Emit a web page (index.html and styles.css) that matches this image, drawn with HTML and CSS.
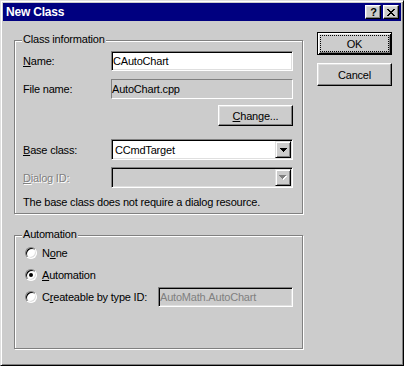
FILE: index.html
```html
<!DOCTYPE html>
<html>
<head>
<meta charset="utf-8">
<title>New Class</title>
<link rel="stylesheet" href="styles.css">
</head>
<body>
<div class="window">
  <div class="titlebar">
    <span class="title">New Class</span>
    <div class="tb-buttons">
      <span class="tb-btn help">?</span>
      <span class="tb-btn close">
        <svg width="8" height="7" viewBox="0 0 8 7" shape-rendering="crispEdges"><path d="M0 0h2v1H0z M6 0h2v1H6z M1 1h2v1H1z M5 1h2v1H5z M2 2h4v1H2z M3 3h2v1H3z M2 4h4v1H2z M1 5h2v1H1z M5 5h2v1H5z M0 6h2v1H0z M6 6h2v1H6z" fill="#000"/></svg>
      </span>
    </div>
  </div>
  <div class="body">
    <div class="left">
      <div class="group g1">
        <div class="legend">Class information</div>
        <div class="row r-name">
          <span class="lbl"><u>N</u>ame:</span>
          <div class="edit field">CAutoChart</div>
        </div>
        <div class="row r-file">
          <span class="lbl">File name:</span>
          <div class="static field">AutoChart.cpp</div>
        </div>
        <div class="row r-change">
          <button class="btn change"><u>C</u>hange...</button>
        </div>
        <div class="row r-base">
          <span class="lbl"><u>B</u>ase class:</span>
          <div class="combo field">
            <span class="combo-text">CCmdTarget</span>
            <span class="combo-btn">
              <svg width="7" height="4" viewBox="0 0 7 4" shape-rendering="crispEdges"><path d="M0 0h7v1H0z M1 1h5v1H1z M2 2h3v1H2z M3 3h1v1H3z" fill="#000"/></svg>
            </span>
          </div>
        </div>
        <div class="row r-dlg">
          <span class="lbl disabled"><u>D</u>ialog ID:</span>
          <div class="combo field is-disabled">
            <span class="combo-text"></span>
            <span class="combo-btn">
              <svg width="8" height="5" viewBox="0 0 8 5" shape-rendering="crispEdges"><path d="M1 1h7v1H1z M2 2h5v1H2z M3 3h3v1H3z M4 4h1v1H4z" fill="#fff"/><path d="M0 0h7v1H0z M1 1h5v1H1z M2 2h3v1H2z M3 3h1v1H3z" fill="#808080"/></svg>
            </span>
          </div>
        </div>
        <p class="note">The base class does not require a dialog resource.</p>
      </div>
      <div class="group g2">
        <div class="legend">Automation</div>
        <div class="radio-row">
          <span class="radio"></span>
          <span>N<u>o</u>ne</span>
        </div>
        <div class="radio-row">
          <span class="radio checked"></span>
          <span><u>A</u>utomation</span>
        </div>
        <div class="radio-row">
          <span class="radio"></span>
          <span class="type-lbl">C<u>r</u>eateable by type ID:</span>
          <div class="edit type-edit is-disabled">AutoMath.AutoChart</div>
        </div>
      </div>
    </div>
    <div class="right">
      <button class="btn default">OK</button>
      <button class="btn">Cancel</button>
    </div>
  </div>
</div>
</body>
</html>
```

FILE: styles.css
```css
:root {
  --face: #cccccc;
}

html, body {
  margin: 0;
  padding: 0;
  background: var(--face);
}

.window {
  width: 404px;
  height: 366px;
  box-sizing: border-box;
  border: 1px solid;
  border-color: #dfdfdf #000 #000 #dfdfdf;
  box-shadow: inset 1px 1px #fff, inset -1px -1px #808080;
  padding: 2px;
  background: var(--face);
  font-family: "Liberation Sans", Arial, sans-serif;
  font-size: 11px;
  letter-spacing: -0.2px;
  color: #000;
  display: flex;
  flex-direction: column;
}

/* Title bar */
.titlebar {
  height: 18px;
  flex: none;
  background: #000080;
  display: flex;
  align-items: center;
  justify-content: space-between;
  padding: 0 2px 0 3px;
}

.title {
  color: #fff;
  font-weight: bold;
  font-size: 12px;
}

.tb-buttons {
  display: flex;
  gap: 2px;
}

.tb-btn {
  width: 16px;
  height: 14px;
  box-sizing: border-box;
  border: 1px solid;
  border-color: #fff #000 #000 #fff;
  box-shadow: inset -1px -1px #808080, inset 1px 1px #dfdfdf;
  background: var(--face);
  display: flex;
  align-items: center;
  justify-content: center;
}

.help {
  font-weight: bold;
  font-size: 11px;
  line-height: 12px;
  letter-spacing: 0;
  padding-left: 1px;
}

/* Body layout */
.body {
  display: flex;
  gap: 14px;
  padding: 11px 0 0 11px;
}

.left {
  width: 289px;
  margin-top: 8px;
  display: flex;
  flex-direction: column;
  gap: 21px;
}

.right {
  width: 75px;
  display: flex;
  flex-direction: column;
  gap: 8px;
}

/* Group boxes */
.group {
  box-sizing: border-box;
  border: 1px solid #808080;
  box-shadow: inset 1px 1px #fff, 1px 1px #fff;
  padding: 0 9px 0 8px;
}

.g1 { height: 174px; }
.g2 { height: 114px; }

.legend {
  width: fit-content;
  margin: -8px 0 0 -1px;
  padding: 0 1px;
  background: var(--face);
  line-height: 13px;
}

/* Rows */
.row {
  display: flex;
  align-items: center;
}

.lbl {
  width: 88px;
  flex: none;
}

.field {
  width: 182px;
  box-sizing: border-box;
}

.r-name { margin-top: 5px; }
.r-file { margin-top: 8px; }
.r-change { margin-top: 6px; justify-content: flex-end; }
.r-base { margin-top: 13px; }
.r-dlg { margin-top: 7px; }

.disabled {
  color: #808080;
  text-shadow: 1px 1px #fff;
}

.note {
  margin: 8px 0 0;
  line-height: 13px;
}

/* Edits */
.edit {
  height: 20px;
  box-sizing: border-box;
  border: 1px solid;
  border-color: #808080 #fff #fff #808080;
  box-shadow: inset 1px 1px #000, inset -1px -1px #dfdfdf;
  background: #fff;
  padding: 0 1px 0 1px;
  display: flex;
  align-items: center;
  white-space: nowrap;
}

.edit.is-disabled {
  background: var(--face);
  color: #808080;
}

.static {
  height: 20px;
  border: 1px solid;
  border-color: #808080 #fff #fff #808080;
  padding: 0 0 0 0;
  display: flex;
  align-items: center;
}

/* Combo boxes */
.combo {
  height: 21px;
  border: 1px solid;
  border-color: #808080 #fff #fff #808080;
  box-shadow: inset 1px 1px #000, inset -1px -1px #dfdfdf;
  background: #fff;
  padding: 1px;
  display: flex;
}

.combo.is-disabled {
  background: var(--face);
}

.combo-text {
  flex: 1;
  display: flex;
  align-items: center;
  padding-left: 2px;
}

.combo-btn {
  width: 16px;
  flex: none;
  box-sizing: border-box;
  border: 1px solid;
  border-color: #dfdfdf #000 #000 #dfdfdf;
  box-shadow: inset 1px 1px #fff, inset -1px -1px #808080;
  background: var(--face);
  display: flex;
  align-items: center;
  justify-content: center;
}

/* Buttons */
.btn {
  width: 75px;
  height: 23px;
  box-sizing: border-box;
  font: inherit;
  letter-spacing: inherit;
  color: #000;
  background: var(--face);
  border: 1px solid;
  border-color: #fff #000 #000 #fff;
  box-shadow: inset -1px -1px #808080, inset 1px 1px #dfdfdf;
  padding: 0;
  margin: 0;
  position: relative;
}

.btn.change {
  height: 21px;
}

.btn.default {
  border-color: #000;
  box-shadow: inset 1px 1px #fff, inset -1px -1px #000, inset 2px 2px #dfdfdf, inset -2px -2px #808080;
}

.btn.default::after {
  content: "";
  position: absolute;
  inset: 2px;
  border: 1px dotted #000;
}

/* Radios */
.radio-row {
  display: flex;
  align-items: center;
  height: 20px;
  margin-top: 2px;
  padding-left: 2px;
}

.radio {
  width: 12px;
  height: 12px;
  box-sizing: border-box;
  border-radius: 50%;
  border: 1px solid;
  border-color: #808080 #fff #fff #808080;
  background: #fff;
  box-shadow: inset 1px 1px #000, inset -1px -1px #dfdfdf;
  margin-right: 5px;
  flex: none;
  display: flex;
  align-items: center;
  justify-content: center;
}

.radio.checked::after {
  content: "";
  width: 4px;
  height: 4px;
  border-radius: 50%;
  background: #000;
}

.type-lbl {
  width: 116px;
  flex: none;
}

.type-edit {
  width: 136px;
}
```
